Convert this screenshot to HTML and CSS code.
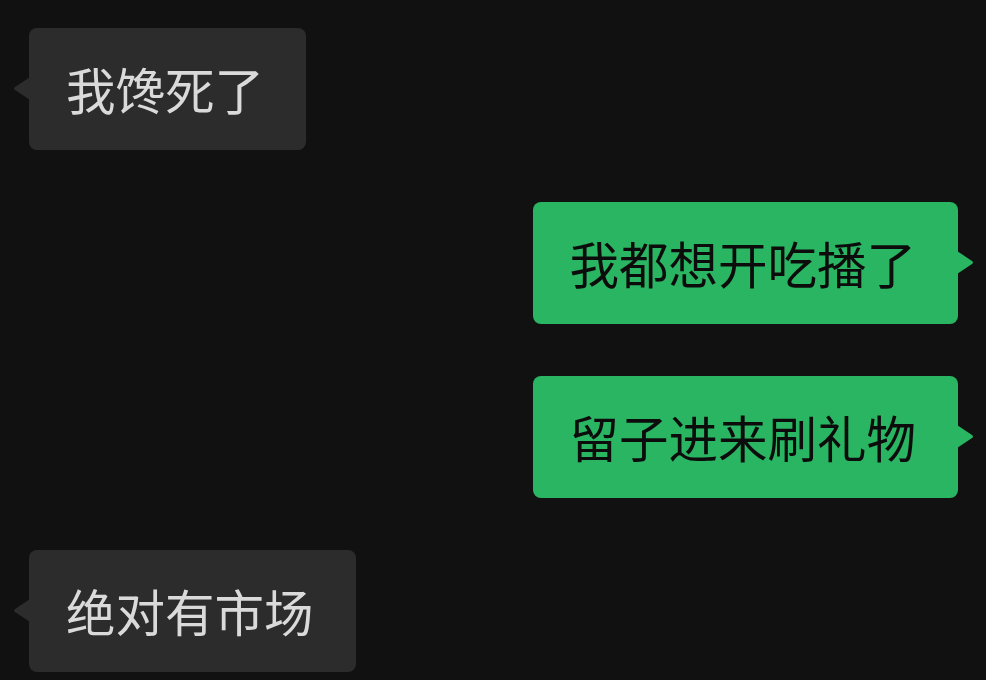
FILE: index.html
```html
<!DOCTYPE html>
<html lang="zh-CN">
<head>
  <meta charset="UTF-8" />
  <title>聊天</title>
  <link rel="stylesheet" href="styles.css">
</head>
<body>

<div id="chat">
  <div class="msg msg-in">我馋死了</div>
  <div class="msg msg-out">我都想开吃播了</div>
  <div class="msg msg-out">留子进来刷礼物</div>
  <div class="msg msg-in">绝对有市场</div>
</div>

</body>
</html>
```

FILE: styles.css
```css
body {
  background: #111;
  margin: 0;
  padding: 0;
  font-family: "Noto Sans CJK SC", "Noto Sans", sans-serif;
}

#chat {
  display: flex;
  flex-direction: column;
  gap: 52px;
  padding: 28px 28px 0 29px;
}

.msg {
  position: relative;
  font-size: 49.5px;
  line-height: 64px;
  padding: 29px 42px 29px 37px;
  border-radius: 8px;
}

.msg::before {
  content: '';
  position: absolute;
  top: 49px;
  width: 17px;
  height: 23px;
  background: inherit;
}

/* Incoming, grey, tail on the left */
.msg-in {
  align-self: flex-start;
  background: #2c2c2c;
  color: #dadada;
}

.msg-in::before {
  left: -16px;
  clip-path: path('M17 0 L2 9.9 Q0 11.5 2 13.1 L17 23 Z');
}

/* Outgoing, green, tail on the right */
.msg-out {
  align-self: flex-end;
  background: #2ab562;
  color: #0c0c0c;
}

.msg-out::before {
  right: -16px;
  clip-path: path('M0 0 L15 9.9 Q17 11.5 15 13.1 L0 23 Z');
}
```
